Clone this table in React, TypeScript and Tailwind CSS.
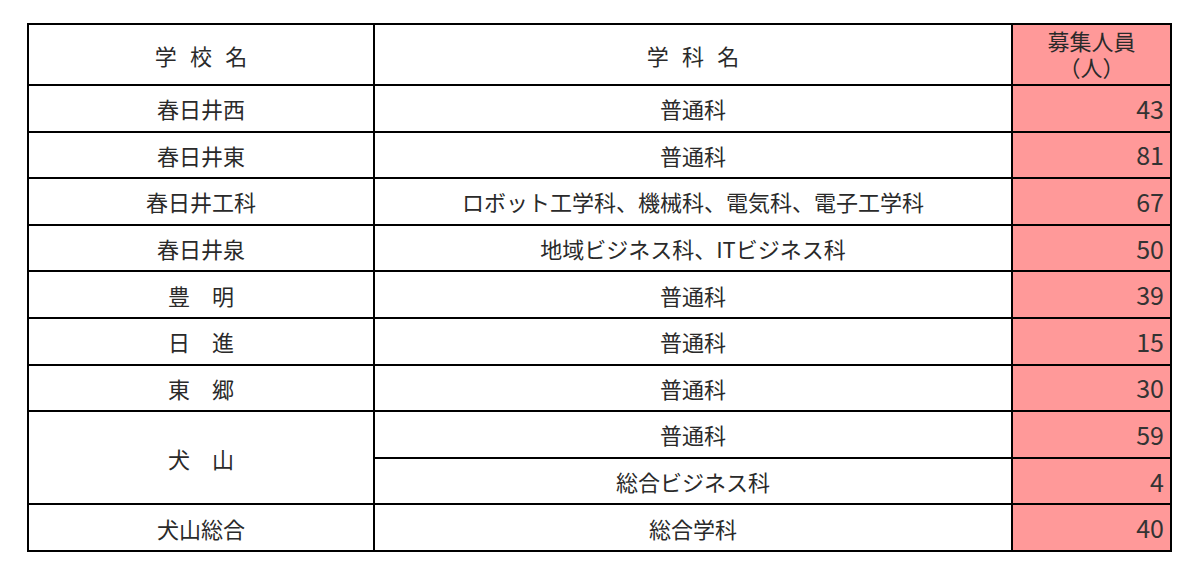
const rows: { school: string; subjects: { name: string; count: number }[] }[] = [
  { school: "春日井西", subjects: [{ name: "普通科", count: 43 }] },
  { school: "春日井東", subjects: [{ name: "普通科", count: 81 }] },
  {
    school: "春日井工科",
    subjects: [{ name: "ロボット工学科、機械科、電気科、電子工学科", count: 67 }],
  },
  {
    school: "春日井泉",
    subjects: [{ name: "地域ビジネス科、ITビジネス科", count: 50 }],
  },
  { school: "豊　明", subjects: [{ name: "普通科", count: 39 }] },
  { school: "日　進", subjects: [{ name: "普通科", count: 15 }] },
  { school: "東　郷", subjects: [{ name: "普通科", count: 30 }] },
  {
    school: "犬　山",
    subjects: [
      { name: "普通科", count: 59 },
      { name: "総合ビジネス科", count: 4 },
    ],
  },
  { school: "犬山総合", subjects: [{ name: "総合学科", count: 40 }] },
];

const cell = "border-[2.5px] border-black";

export default function App() {
  return (
    <div
      className="h-[581px] w-[1200px] bg-white pl-[27px] pt-[23px] text-[#2a2a2a]"
      style={{ fontFamily: '"Noto Sans CJK JP", "Noto Sans", sans-serif' }}
    >
      <table className="w-[1143px] table-fixed border-collapse border-[2.5px] border-black text-[22px] leading-none">
        <colgroup>
          <col className="w-[346px]" />
          <col className="w-[638px]" />
          <col className="w-[159px]" />
        </colgroup>
        <thead>
          <tr className="h-[61px]">
            <th className={`${cell} font-normal`}>
              <span className="pl-[0.6em] tracking-[0.6em]">学校名</span>
            </th>
            <th className={`${cell} font-normal`}>
              <span className="pl-[0.6em] tracking-[0.6em]">学科名</span>
            </th>
            <th className={`${cell} bg-[#ff9999] pt-[2px] align-top font-normal leading-[26px]`}>
              <div>募集人員</div>
              <div>（人）</div>
            </th>
          </tr>
        </thead>
        <tbody>
          {rows.map((r) =>
            r.subjects.map((s, i) => (
              <tr key={r.school + s.name} className="h-[46.6px]">
                {i === 0 && (
                  <td className={`${cell} text-center`} rowSpan={r.subjects.length}>
                    {r.school}
                  </td>
                )}
                <td className={`${cell} text-center`}>{s.name}</td>
                <td className={`${cell} bg-[#ff9999] pr-[6px] text-right text-[25px] text-[#333]`}>
                  {s.count}
                </td>
              </tr>
            ))
          )}
        </tbody>
      </table>
    </div>
  );
}
